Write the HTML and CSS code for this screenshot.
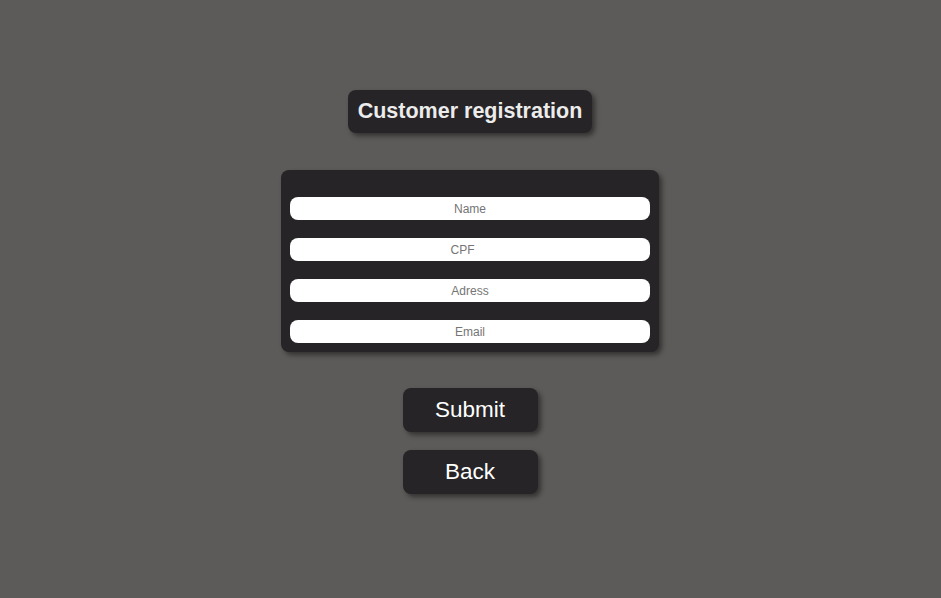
FILE: index.html
```html
<!DOCTYPE html>
<html>
<head>
<meta charset="utf-8">
<link rel="stylesheet" href="styles.css">
</head>
<body>
<main class="page">
  <h1 class="title">Customer registration</h1>
  <form class="card">
    <input class="field" type="text" placeholder="Name">
    <input class="field" type="number" placeholder="CPF">
    <input class="field" type="text" placeholder="Adress">
    <input class="field" type="email" placeholder="Email">
  </form>
  <div class="actions">
    <button class="btn" type="button">Submit</button>
    <button class="btn" type="button">Back</button>
  </div>
</main>
</body>
</html>
```
FILE: styles.css
```css
html, body {
  margin: 0;
  padding: 0;
  background: #5c5b59;
  height: 100%;
}
.page {
  display: flex;
  flex-direction: column;
  align-items: center;
  padding-top: 90px;
  padding-right: 1px;
  font-family: "Liberation Sans", Arial, sans-serif;
}
.title {
  margin: 0;
  box-sizing: border-box;
  width: 244px;
  height: 43px;
  display: flex;
  align-items: center;
  justify-content: center;
  background: #262426;
  color: #ececec;
  font-size: 21.5px;
  font-weight: bold;
  border-radius: 8px;
  box-shadow: 3px 3px 5px rgba(0,0,0,0.45);
}
.card {
  margin-top: 37px;
  box-sizing: border-box;
  width: 378px;
  padding: 27px 9px 9px;
  background: #262426;
  border-radius: 8px;
  display: flex;
  flex-direction: column;
  gap: 18px;
  box-shadow: 3px 3px 5px rgba(0,0,0,0.45);
}
.field {
  box-sizing: border-box;
  width: 360px;
  height: 23px;
  border: none;
  border-radius: 8px;
  background: #fff;
  text-align: center;
  font-family: "Liberation Sans", Arial, sans-serif;
  font-size: 12px;
  padding: 0;
  outline: none;
}
.field::placeholder {
  color: #757575;
}
.actions {
  margin-top: 36px;
  display: flex;
  flex-direction: column;
  gap: 18px;
}
.btn {
  width: 135px;
  height: 44px;
  border: none;
  border-radius: 8px;
  background: #262426;
  color: #fff;
  font-family: "Liberation Sans", Arial, sans-serif;
  font-size: 22.5px;
  padding: 0;
  box-shadow: 3px 3px 5px rgba(0,0,0,0.45);
  cursor: pointer;
}
```
